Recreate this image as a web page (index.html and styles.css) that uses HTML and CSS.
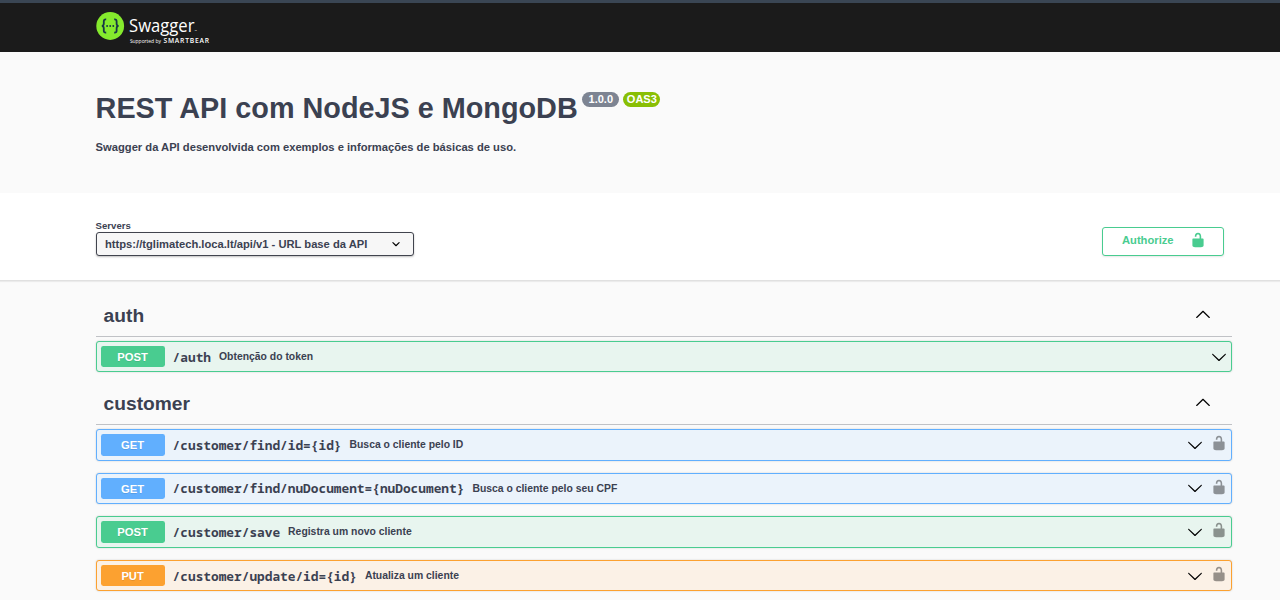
FILE: index.html
```html
<!DOCTYPE html>
<html lang="pt-BR">
<head>
<meta charset="utf-8">
<title>Swagger UI</title>
<link rel="stylesheet" href="styles.css">
</head>
<body>
<svg width="0" height="0" class="symbols">
  <symbol id="unlocked" viewBox="0 0 20 20"><path d="M15.8 8H14V5.6C14 2.703 12.665 1 10 1 7.334 1 6 2.703 6 5.6V6h2v-.801C8 3.754 8.797 3 10 3c1.203 0 2 .754 2 2.199V8H4c-.553 0-1 .646-1 1.199V17c0 .549.428 1.139.951 1.307l1.197.387C5.672 18.861 6.55 19 7.1 19h5.8c.549 0 1.428-.139 1.951-.307l1.196-.387c.524-.167.953-.757.953-1.306V9.199C17 8.646 16.352 8 15.8 8z"/></symbol>
  <symbol id="arrow-up" viewBox="0 0 20 20"><path d="M17.418 14.908c.272.281.709.281.979 0s.271-.738 0-1.02l-7.907-7.83a.697.697 0 0 0-.979 0l-7.908 7.83c-.27.282-.27.739 0 1.02.271.281.709.281.979 0L10 7.767z"/></symbol>
  <symbol id="arrow-down" viewBox="0 0 20 20"><path d="M17.418 6.109c.272-.268.709-.268.979 0s.271.701 0 .969l-7.908 7.83a.697.697 0 0 1-.979 0l-7.908-7.83c-.27-.268-.27-.701 0-.969.271-.268.709-.268.979 0L10 13.25z"/></symbol>
</svg>
<header class="topbar">
  <div class="wrapper">
    <svg class="logo" width="120" height="36" viewBox="0 0 120 36">
      <circle cx="14.2" cy="15" r="13.9" fill="#85ea2d"/>
      <g fill="none" stroke="#173647" stroke-width="1.8" transform="translate(.4 0)">
        <path d="M9.8 8.4C7.8 8.2 7.4 9 7.4 10.6v1.8c0 1.5-.5 2.3-1.9 2.5 1.4.2 1.9 1 1.9 2.5v2c0 1.6.4 2.3 2.4 2.1"/>
        <path d="M17.8 8.4c2-.2 2.4.6 2.4 2.2v1.8c0 1.5.5 2.3 1.9 2.5-1.4.2-1.9 1-1.9 2.5v2c0 1.6-.4 2.3-2.4 2.1"/>
      </g>
      <g fill="#173647"><circle cx="11.1" cy="15" r=".95"/><circle cx="14.2" cy="15" r=".95"/><circle cx="17.3" cy="15" r=".95"/></g>
      <text class="logo-name" x="33.1" y="20.6" textLength="65.4" lengthAdjust="spacingAndGlyphs">Swagger</text>
      <text class="logo-tm" x="98.6" y="20.5">™</text>
      <text class="logo-by" x="33.9" y="32" textLength="31" lengthAdjust="spacingAndGlyphs">Supported by</text>
      <text class="logo-brand" x="67.4" y="32" textLength="45.6">SMARTBEAR</text>
    </svg>
  </div>
</header>
<section class="info">
  <div class="wrapper">
    <h1 class="title">REST API com NodeJS e MongoDB<span class="badges"><span class="badge">1.0.0</span><span class="badge oas">OAS3</span></span></h1>
    <p class="description">Swagger da API desenvolvida com exemplos e informações de básicas de uso.</p>
  </div>
</section>
<section class="schemes">
  <div class="wrapper schemes-row">
    <div class="servers">
      <span class="servers-label">Servers</span>
      <div class="select"><span>https://tglimatech.loca.lt/api/v1 - URL base da API</span>
        <svg width="16" height="16" viewBox="0 0 20 20"><path d="M13.418 7.859a.695.695 0 0 1 .978 0 .68.68 0 0 1 0 .969l-3.908 3.83a.697.697 0 0 1-.979 0l-3.908-3.83a.68.68 0 0 1 0-.969.695.695 0 0 1 .978 0L10 11z"/></svg>
      </div>
    </div>
    <button class="authorize"><span>Authorize</span><svg width="16" height="16"><use href="#unlocked"/></svg></button>
  </div>
</section>
<main class="wrapper">
  <section class="tag auth">
    <h2 class="tag-head"><span>auth</span><svg width="16" height="16"><use href="#arrow-up"/></svg></h2>
    <div class="op post"><span class="method">POST</span><span class="path">/auth</span><span class="summary">Obtenção do token</span><svg class="arrow" width="16" height="16"><use href="#arrow-down"/></svg></div>
  </section>
  <section class="tag">
    <h2 class="tag-head"><span>customer</span><svg width="16" height="16"><use href="#arrow-up"/></svg></h2>
    <div class="op get"><span class="method">GET</span><span class="path">/customer/find/id={id}</span><span class="summary">Busca o cliente pelo ID</span><svg class="arrow" width="16" height="16"><use href="#arrow-down"/></svg><svg class="lock" width="16" height="16"><use href="#unlocked"/></svg></div>
    <div class="op get"><span class="method">GET</span><span class="path">/customer/find/nuDocument={nuDocument}</span><span class="summary">Busca o cliente pelo seu CPF</span><svg class="arrow" width="16" height="16"><use href="#arrow-down"/></svg><svg class="lock" width="16" height="16"><use href="#unlocked"/></svg></div>
    <div class="op post"><span class="method">POST</span><span class="path">/customer/save</span><span class="summary">Registra um novo cliente</span><svg class="arrow" width="16" height="16"><use href="#arrow-down"/></svg><svg class="lock" width="16" height="16"><use href="#unlocked"/></svg></div>
    <div class="op put"><span class="method">PUT</span><span class="path">/customer/update/id={id}</span><span class="summary">Atualiza um cliente</span><svg class="arrow" width="16" height="16"><use href="#arrow-down"/></svg><svg class="lock" width="16" height="16"><use href="#unlocked"/></svg></div>
  </section>
</main>
</body>
</html>
```
FILE: styles.css
```css
* { box-sizing: border-box; }
html { overflow: hidden; }
body { margin: 0; height: 600px; overflow: hidden; background: #fafafa; color: #3b4151; font-family: "Liberation Sans", Arial, sans-serif; }
.symbols { display: none; }
.wrapper { width: 1136px; margin-left: 95.6px; }
.topbar { height: 52px; border-top: 3px solid #3a4654; background: #1b1b1b; padding-top: 8px; }
.logo { display: block; overflow: visible; }
.logo text { fill: #fff; font-family: "Open Sans", sans-serif; }
.logo .logo-name { font-size: 18.5px; }
.logo .logo-tm { font-size: 3px; }
.logo .logo-by { font-size: 5.2px; }
.logo .logo-brand { font-size: 6.7px; font-weight: 600; }
.info { height: 141px; padding-top: 40px; }
.title { display: flex; margin: 0; height: 33px; font-size: 28.8px; line-height: 33px; font-weight: 700; }
.badges { display: flex; gap: 4px; margin-left: 4.6px; }
.badge { height: 15px; padding: 0 6px; border-radius: 8px; background: #7d8492; color: #fff; font-size: 11px; line-height: 15px; width: 37px; text-align: center; }
.badge.oas { background: #89bf04; padding: 0; }
.description { margin: 15px 0 0; font-size: 11.2px; line-height: 14px; font-weight: 700; }
.schemes { height: 88px; background: #fff; padding-top: 27px; box-shadow: 0 1px 1px rgba(0,0,0,.06); border-bottom: 1px solid #e0e0e0; }
.schemes-row { display: flex; justify-content: space-between; }
.servers { display: flex; flex-direction: column; font-weight: 700; }
.servers-label { font-size: 9.6px; line-height: 12px; }
.select { display: flex; align-items: center; justify-content: space-between; width: 318px; height: 24px; padding: 0 9px 0 8.4px; border: 1px solid #41444e; border-radius: 3px; background: #f7f7f7; box-shadow: 0 1px 2px rgba(0,0,0,.25); font-size: 11.2px; }
.authorize { display: flex; justify-content: space-between; width: 122px; height: 29px; margin: 7px 8px 0 0; padding: 5px 17px 0 19.4px; border: 1px solid #49cc90; border-radius: 3px; background: #fff; color: #49cc90; box-shadow: 0 1px 2px rgba(0,0,0,.1); font: 700 11.2px/15px "Liberation Sans", Arial, sans-serif; }
.authorize svg { margin-top: -1px; fill: #49cc90; }
.tag { height: 88.2px; }
.tag-head { display: flex; align-items: center; justify-content: space-between; height: 44px; margin: 0 0 4px; padding: 0 21px 0 8px; border-bottom: 1px solid rgba(59,65,81,.3); font-size: 19.2px; line-height: 24px; }
.tag-head span { padding-top: 2px; }
.tag-head svg { margin-bottom: 2px; }
.tag.auth { padding-top: 12px; height: 100.2px; }
.op { display: flex; align-items: center; height: 31.4px; margin-bottom: 12.2px; padding: 0 4px; border: 1px solid; border-radius: 3px; box-shadow: 0 0 2px rgba(0,0,0,.19); }
.method { width: 64px; height: 21.4px; border-radius: 2.4px; color: #fff; font-size: 11.2px; line-height: 22.4px; font-weight: 700; text-align: center; text-shadow: 0 1px 0 rgba(0,0,0,.1); }
.path { padding: 0 8px; font-family: "Noto Sans Mono", "DejaVu Sans Mono", monospace; font-size: 12.8px; line-height: 16px; font-weight: 700; }
.summary { flex: 1; padding-top: .4px; font-size: 10.4px; line-height: 14px; font-weight: 700; }
.lock { margin: -3.6px 0 0 8px; fill: #000; opacity: .4; }
.post { border-color: #49cc90; background: #e8f5ef; }
.post .method { background: #49cc90; }
.get { border-color: #61affe; background: #ebf3fb; }
.get .method { background: #61affe; }
.put { border-color: #fca130; background: #fbf1e6; }
.put .method { background: #fca130; }
```
